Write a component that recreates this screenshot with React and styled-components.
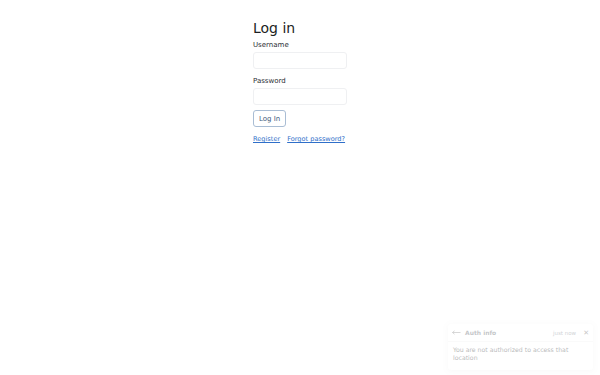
import React from 'react'
import styled, { createGlobalStyle } from 'styled-components'

const fontStack = '"DejaVu Sans", "Liberation Sans", sans-serif'

const GlobalStyle = createGlobalStyle`
  html, body {
    margin: 0;
    padding: 0;
    background: #fff;
    font-family: ${fontStack};
    color: #212529;
  }
`

const Page = styled.div`
  width: 600px;
  height: 375px;
  position: relative;
  overflow: hidden;
`

const Form = styled.form`
  width: 94px;
  margin: 0 auto;
  padding-top: 19px;
  display: flex;
  flex-direction: column;
`

const Title = styled.h1`
  margin: 0 0 3px;
  font-size: 14px;
  font-weight: 400;
  line-height: 18px;
  color: #1c1f23;
`

const Label = styled.label`
  font-size: 7px;
  line-height: 10px;
  margin-bottom: 2px;
  color: #2a2e33;
`

const Input = styled.input`
  box-sizing: border-box;
  width: 94px;
  height: 17px;
  border: 1px solid #eff0f2;
  border-radius: 3px;
  margin: 0 0 ${p => p.$gap}px;
  padding: 0 4px;
  font: inherit;
  font-size: 7px;
  outline: none;
`

const Button = styled.button`
  align-self: flex-start;
  box-sizing: border-box;
  height: 17px;
  padding: 0 5px;
  border: 1px solid #a9bdd4;
  border-radius: 3px;
  background: #fff;
  color: #3f5b7e;
  font-family: ${fontStack};
  font-size: 7px;
  margin-bottom: 7px;
`

const Links = styled.div`
  display: flex;
  gap: 7px;
  white-space: nowrap;
`

const Link = styled.a`
  color: #2f6fc9;
  font-size: 6.6px;
  text-decoration: underline;
  line-height: 10px;
`

const Toast = styled.div`
  position: absolute;
  right: 7px;
  bottom: 5px;
  width: 145px;
  box-sizing: border-box;
  background: #fff;
  border-radius: 3px;
  box-shadow: 0 1px 6px rgba(0, 0, 0, 0.08);
  opacity: 0.32;
`

const ToastHeader = styled.div`
  display: flex;
  align-items: center;
  height: 17px;
  padding: 0 4px;
  border-bottom: 1px solid #f2f2f2;
  font-size: 5.5px;
  color: #6c757d;
`

const ToastTitle = styled.strong`
  flex: 1;
  margin-left: 4px;
  font-size: 6px;
  color: #495057;
`

const Close = styled.span`
  margin-left: 7px;
  font-size: 7px;
  color: #555;
`

const ToastBody = styled.div`
  padding: 4px 5px 8px;
  font-size: 6.2px;
  line-height: 8px;
  color: #212529;
`

export default function App () {
  return (
    <Page>
      <GlobalStyle />
      <Form onSubmit={e => e.preventDefault()}>
        <Title>Log in</Title>
        <Label>Username</Label>
        <Input $gap={7} />
        <Label>Password</Label>
        <Input type='password' $gap={5} />
        <Button type='submit'>Log In</Button>
        <Links>
          <Link href='#'>Register</Link>
          <Link href='#'>Forgot password?</Link>
        </Links>
      </Form>
      <Toast>
        <ToastHeader>
          <svg width='9' height='5' viewBox='0 0 9 5'>
            <path d='M0.5 2.5H8.5M0.5 2.5L2.5 0.8M0.5 2.5L2.5 4.2' stroke='#555' strokeWidth='0.7' fill='none' />
          </svg>
          <ToastTitle>Auth info</ToastTitle>
          <span>just now</span>
          <Close>✕</Close>
        </ToastHeader>
        <ToastBody>You are not authorized to access that location</ToastBody>
      </Toast>
    </Page>
  )
}
